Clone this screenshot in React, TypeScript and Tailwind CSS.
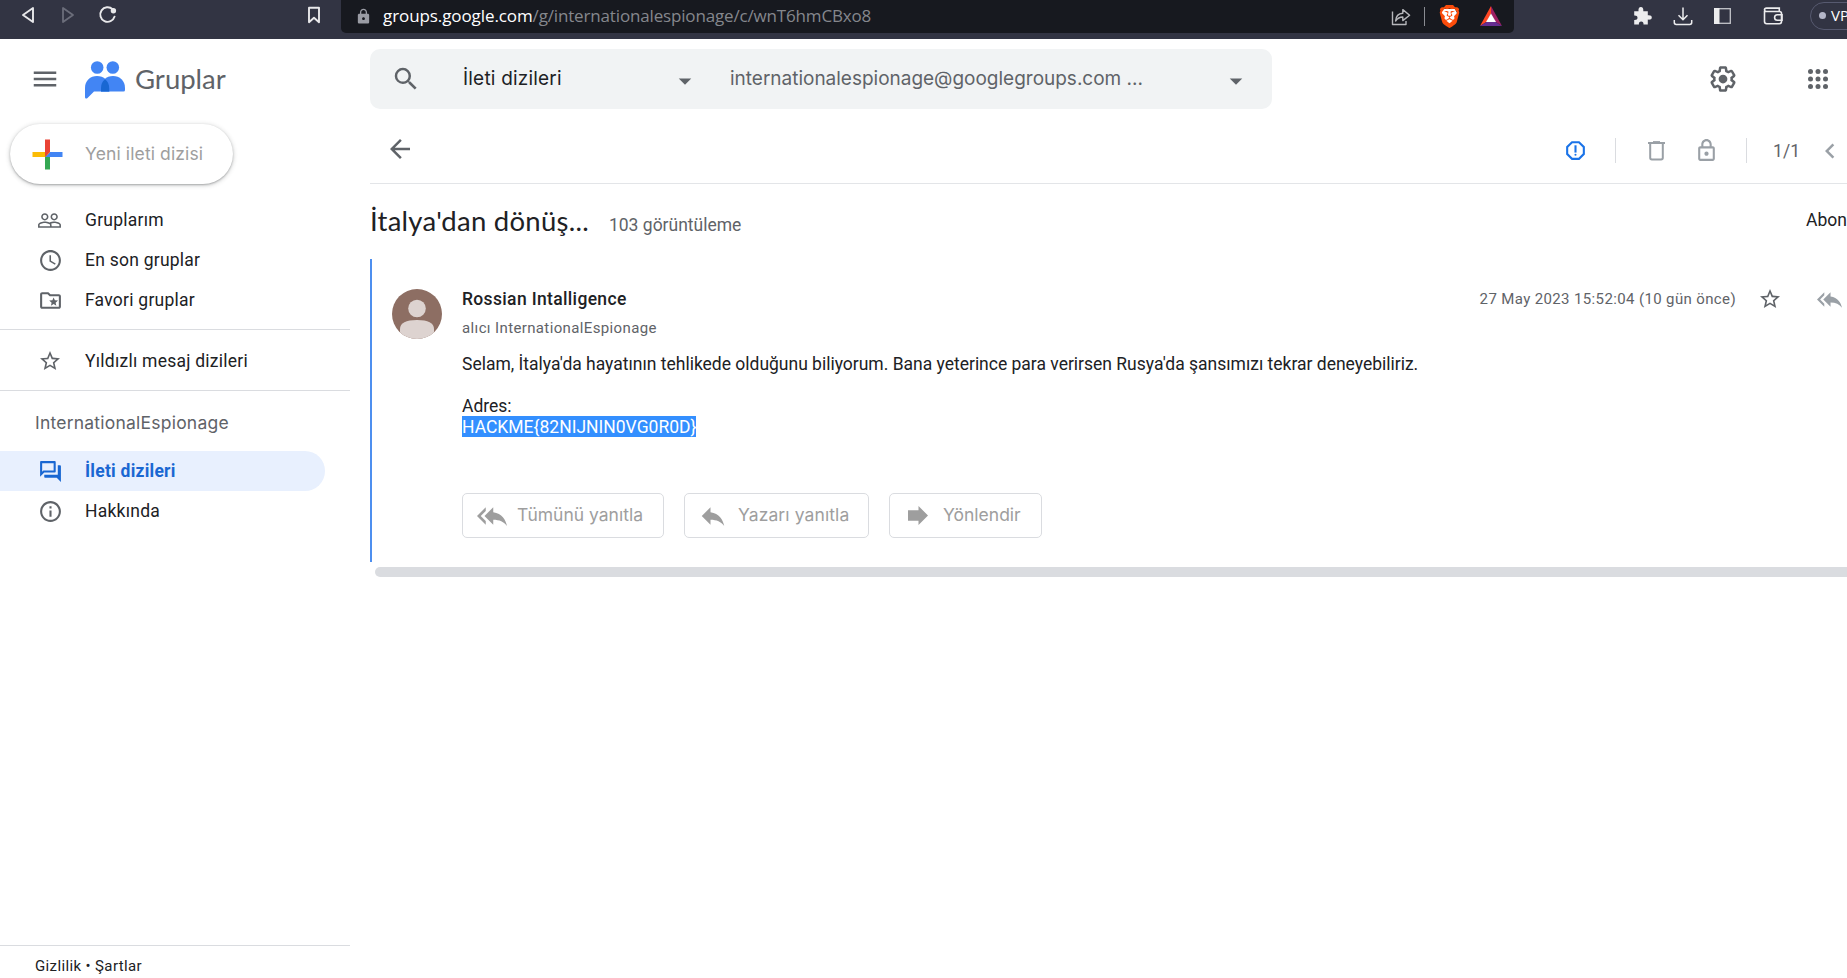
import type { ReactNode } from "react";
import {
  MdAccessTime,
  MdArrowBack,
  MdArrowDropDown,
  MdChevronLeft,
  MdInfoOutline,
  MdLock,
  MdLockOutline,
  MdMenu,
  MdOutlineFolderSpecial,
  MdOutlineForum,
  MdOutlineReport,
  MdPeopleOutline,
  MdReply,
  MdReplyAll,
  MdSearch,
  MdStarBorder,
} from "react-icons/md";
import { SiBrave } from "react-icons/si";

function BrowserBar() {
  return (
    <header className="flex h-[39px] w-full shrink-0 items-start overflow-hidden bg-[#323443] text-[#e8e8ea]">
      <div className="flex h-[30px] w-[341px] shrink-0 items-center">
        <svg className="ml-[21px] h-[18px] w-[14px]" viewBox="0 0 14 18" fill="none" stroke="currentColor" strokeWidth="1.9" strokeLinejoin="round">
          <path d="M12 2v14L2 9z" />
        </svg>
        <svg className="ml-[26px] h-[18px] w-[14px] text-[#6b6d7a]" viewBox="0 0 14 18" fill="none" stroke="currentColor" strokeWidth="1.8" strokeLinejoin="round">
          <path d="M2 2v14l10-7z" />
        </svg>
        <svg className="ml-[23px] h-[20px] w-[20px]" viewBox="0 0 20 20" fill="none" stroke="currentColor" strokeWidth="1.9" strokeLinecap="round">
          <path d="M14.6 4.2A7.3 7.3 0 1 0 16.6 11.6" />
          <circle cx="15.4" cy="5.8" r="2.7" fill="currentColor" stroke="none" />
        </svg>
        <svg className="ml-[189px] h-[18px] w-[14px]" viewBox="0 0 14 18" fill="none" stroke="currentColor" strokeWidth="1.9" strokeLinejoin="round">
          <path d="M2 1.8h10v14.4l-5-4.4-5 4.4z" />
        </svg>
      </div>
      <div className="flex h-[33px] w-[1173px] shrink-0 items-start rounded-b-[5px] bg-[#17191f]">
        <div className="flex h-8 flex-1 items-center">
          <MdLock className="ml-[14px] size-[17px] text-[#9a9ca4]" />
          <div className="ml-[11px] font-['Open_Sans',sans-serif] text-[17px] leading-8 whitespace-nowrap">
            <span className="tracking-[-0.09px] text-white">groups.google.com</span>
            <span className="tracking-[-0.16px] text-[#85878d]">/g/internationalespionage/c/wnT6hmCBxo8</span>
          </div>
        </div>
        <div className="flex h-8 shrink-0 items-center pr-[12px]">
          <svg className="h-[19px] w-[20px] text-[#b6b7bb]" viewBox="0 0 20 19" fill="none" stroke="currentColor" strokeWidth="1.4" strokeLinejoin="round">
            <path d="M1.5 4.5v13h13.500V14" />
            <path d="M4.600 14c.3-5 3-7.600 7.200-7.800V2.600l6.800 5.600-6.800 5.400V10c-3.200 0-5.300 1.200-7.200 4z" />
          </svg>
          <div className="ml-[13px] h-[19px] w-px bg-[#8a8c92]" />
          <span className="relative ml-[14px] block h-[23px] w-[20px]">
            <svg className="absolute inset-0 h-[23px] w-[20px]" viewBox="0 0 20 23">
              <path d="M4 4h12l2 4-3 10-5 3-5-3L2 8z" fill="#fff" />
            </svg>
            <SiBrave className="absolute top-0 -left-[1.5px] size-[23px] text-[#fb4c0b]" />
          </span>
          <svg className="ml-[21px] h-[20px] w-[22px]" viewBox="0 0 22 20">
            <path d="M11 0 0 20l6.400-4L11 8z" fill="#ff4724" />
            <path d="M11 0l11 20-6.400-4L11 8z" fill="#9e1f63" />
            <path d="M0 20h22l-6.400-4H6.400z" fill="#662d91" />
            <path d="M11 7.600 6 16h10z" fill="#fff" />
          </svg>
        </div>
      </div>
      <div className="flex h-[31px] flex-1 shrink-0 items-center text-[#ececee]">
        <svg className="ml-[118px] h-[20px] w-[21px] shrink-0" viewBox="0 0 21 20" fill="currentColor">
          <path d="M2.200 5.200h4.300C6.200 2.500 7.200 1 8.900 1s2.700 1.500 2.400 4.200h4.500v4c2.600-.3 4 .6 4 2.200s-1.400 2.500-4 2.200v5h-4.300c.2-2-.7-3.200-2.300-3.200S6.700 16.600 6.900 18.600H2.200V14c2.100.2 3.300-.7 3.300-2.200S4.300 9.400 2.200 9.600z" />
        </svg>
        <svg className="ml-[20px] h-[20px] w-[20px] shrink-0" viewBox="0 0 20 20" fill="none" stroke="currentColor" strokeWidth="1.5">
          <path d="M10 1.500v12M5.500 9.300 10 13.800l4.500-4.500M1.300 14v2.600q0 1.900 1.900 1.900h13.600q1.900 0 1.900-1.900V14" />
        </svg>
        <svg className="ml-[21px] h-[16px] w-[17px] shrink-0" viewBox="0 0 17 16">
          <rect x=".7" y=".7" width="15.600" height="14.600" fill="none" stroke="#c4c5ca" strokeWidth="1.300" />
          <path d="M0 0h5.500v16H0z" fill="currentColor" />
        </svg>
        <svg className="ml-[32px] h-[18px] w-[21px] shrink-0" viewBox="0 0 21 18" fill="none" stroke="currentColor" strokeWidth="1.600">
          <path d="M1.500 4V14.500q0 2.200 2.200 2.200h12.600q2.200 0 2.200-2.200V6.500q0-2-2.200-2H3.500q-2 0-2-1.700t2-1.700h12.800v3" />
          <path d="M19 7.800h-4.700a2.700 2.700 0 0 0 0 5.400H19z" />
        </svg>
        <div className="-mr-6 ml-[26px] flex h-[28px] w-[80px] shrink-0 items-center rounded-full border-[1.5px] border-[#575a70] pl-[8px]">
          <span className="size-[7px] rounded-full bg-[#b4b6c8]" />
          <span className="ml-[5px] font-['Open_Sans',sans-serif] text-[15px] text-white">VP</span>
        </div>
      </div>
    </header>
  );
}

function GroupsLogo() {
  return (
    <svg className="h-[38px] w-[40px]" viewBox="0 0 40 38">
      <circle cx="12.200" cy="6.500" r="6.300" fill="#4285f4" />
      <circle cx="27.800" cy="6.500" r="6.300" fill="#4285f4" />
      <path d="M0 27C0 19.500 5.400 15 12 15s12.400 4.500 12.400 12v3.500H9L2.500 37C1.500 38 0 37.600 0 36z" fill="#4285f4" />
      <path d="M16 27c0-7.500 5.400-12 12-12s12 4.500 12 12v2q0 1.500-1.500 1.500H16z" fill="#4285f4" />
      <path d="M20 18.200c2.800 2.200 4.200 5.200 4.200 8.800v3.500H16V27c0-3.600 1.300-6.600 4-8.800z" fill="#1967d2" />
    </svg>
  );
}

function ComposeButton() {
  return (
    <button className="ml-[10px] flex h-[60px] w-[223px] shrink-0 items-center rounded-full bg-white shadow-[0_1px_2px_0_rgba(60,64,67,0.35),0_1px_4px_1px_rgba(60,64,67,0.18)]">
      <svg className="ml-[15px] size-[45px]" viewBox="0 0 36 36">
        <path fill="#34A853" d="M16 16v14h4V20z" />
        <path fill="#4285F4" d="M30 16H20l-4 4h14z" />
        <path fill="#FBBC05" d="M6 16v4h10l4-4z" />
        <path fill="#EA4335" d="M20 16V6h-4v14z" />
      </svg>
      <span className="ml-[15px] font-['Inter',sans-serif] text-[17.5px] tracking-[0.12px] text-[#9e9e9e]">Yeni ileti dizisi</span>
    </button>
  );
}

function NavItem({ icon, label, active }: { icon: ReactNode; label: string; active?: boolean }) {
  return (
    <a
      className={
        active
          ? "flex h-10 w-[325px] shrink-0 items-center rounded-r-full bg-[#e8f0fe] font-bold text-[#1967d2]"
          : "flex h-10 w-[325px] shrink-0 items-center text-[#202124]"
      }
    >
      <span className={active ? "ml-[38px] flex size-[25px] items-center" : "ml-[38px] flex size-[25px] items-center text-[#5f6368]"}>{icon}</span>
      <span className="ml-[22px] text-[17.5px] tracking-[0.24px] whitespace-nowrap">{label}</span>
    </a>
  );
}

function Sidebar() {
  return (
    <aside className="flex w-[350px] shrink-0 flex-col">
      <div className="flex h-[85px] shrink-0 items-start text-[#5f6368]">
        <MdMenu className="mt-[25px] ml-[30px] size-[30px]" />
        <div className="mt-[22px] ml-[25px]">
          <GroupsLogo />
        </div>
        <span className="mt-[21px] ml-[10px] font-['Lato',sans-serif] text-[27.5px] leading-[38px]">Gruplar</span>
      </div>
      <ComposeButton />
      <nav className="mt-4 flex flex-col">
        <NavItem icon={<MdPeopleOutline className="-ml-px size-[25px]" />} label="Gruplarım" />
        <NavItem icon={<MdAccessTime className="size-[25px]" />} label="En son gruplar" />
        <NavItem icon={<MdOutlineFolderSpecial className="size-[25px]" />} label="Favori gruplar" />
        <div className="mt-[9px] border-y border-[#dadce0] pt-[11px] pb-[9px]">
          <NavItem icon={<MdStarBorder className="size-6" />} label="Yıldızlı mesaj dizileri" />
        </div>
        <h2 className="h-[60px] pt-[2px] pl-[35px] font-['Inter',sans-serif] text-[17.5px] leading-[60px] tracking-[0.22px] text-[#5f6368]">InternationalEspionage</h2>
        <NavItem active icon={<MdOutlineForum className="size-[25px]" />} label="İleti dizileri" />
        <NavItem icon={<MdInfoOutline className="size-[25px]" />} label="Hakkında" />
      </nav>
      <footer className="mt-auto h-[33px] border-t border-[#dadce0] pt-[10px] pl-[35px] text-[15px] leading-5 tracking-[0.37px] text-[#202124]">
        Gizlilik • Şartlar
      </footer>
    </aside>
  );
}

function SearchHeader() {
  return (
    <div className="mt-[10px] flex h-[60px] shrink-0 items-center">
      <div className="flex h-[60px] w-[902px] shrink-0 items-center rounded-[10px] bg-[#f1f3f4] font-['Inter',sans-serif] text-[19px] text-[#5f6368]">
        <MdSearch className="ml-[21px] size-[30px]" />
        <span className="ml-[42px] w-[207px] tracking-[0.2px] text-[#202124]">İleti dizileri</span>
        <MdArrowDropDown className="mt-[3px] size-[30px]" />
        <span className="ml-[30px] w-[491px] tracking-[-0.01px] whitespace-nowrap">internationalespionage@googlegroups.com ...</span>
        <MdArrowDropDown className="mt-[3px] size-[30px]" />
      </div>
      <svg className="ml-[436px] size-[30px] text-[#5f6368]" viewBox="0 0 24 24" fill="currentColor">
        <path d="M13.850 22.250h-3.700c-.74 0-1.360-.54-1.450-1.270l-.27-1.890c-.27-.14-.53-.29-.79-.46l-1.800.72c-.7.26-1.470-.03-1.810-.65L2.200 15.530c-.35-.66-.2-1.440.36-1.880l1.530-1.190c-.01-.15-.02-.3-.02-.46 0-.15.01-.31.02-.46l-1.520-1.190c-.59-.45-.74-1.260-.37-1.880l1.850-3.190c.34-.62 1.110-.9 1.790-.63l1.810.73c.26-.17.52-.32.78-.46l.27-1.910c.09-.7.71-1.250 1.440-1.250h3.700c.74 0 1.360.54 1.450 1.270l.27 1.890c.27.14.53.29.79.46l1.800-.72c.71-.26 1.480.03 1.820.65l1.840 3.180c.36.66.2 1.440-.36 1.880l-1.520 1.190c.01.15.02.3.02.46s-.01.31-.02.46l1.520 1.190c.56.45.72 1.230.37 1.860l-1.860 3.220c-.34.62-1.110.9-1.800.63l-1.800-.72c-.26.17-.52.32-.78.46l-.27 1.910c-.1.68-.72 1.220-1.460 1.220zm-3.230-2h2.760l.37-2.550.53-.22c.44-.18.88-.44 1.340-.78l.45-.34 2.380.96 1.380-2.400-2.030-1.580.07-.56c.03-.26.06-.51.06-.78s-.03-.53-.06-.78l-.07-.56 2.030-1.580-1.390-2.400-2.390.96-.45-.35c-.42-.32-.87-.58-1.330-.77l-.52-.22-.37-2.550h-2.760l-.37 2.550-.53.21c-.44.19-.88.44-1.340.79l-.45.33-2.380-.95-1.390 2.390 2.030 1.580-.07.56a7 7 0 0 0-.06.79c0 .26.02.53.06.78l.07.56-2.030 1.580 1.380 2.400 2.390-.96.45.35c.43.33.86.58 1.330.77l.53.22z" />
        <circle cx="12" cy="12" r="3.500" />
      </svg>
      <svg className="ml-[65px] size-[30px] shrink-0 text-[#5f6368]" viewBox="0 0 24 24" fill="currentColor">
        {[6, 12, 18].map((y) => [6, 12, 18].map((x) => <circle key={`${x}-${y}`} cx={x} cy={y} r="2" />))}
      </svg>
    </div>
  );
}

function Toolbar() {
  return (
    <div className="flex h-[75px] shrink-0 items-center border-b border-[#e3e5e8] pt-[6px] text-[#9aa0a6]">
      <MdArrowBack className="ml-[15px] size-[30px] text-[#5f6368]" />
      <div className="ml-auto flex items-center pt-[3px] pr-[2px]">
        <MdOutlineReport className="size-[25px] text-[#1a73e8]" />
        <div className="ml-[27px] h-[25px] w-px bg-[#dadce0]" />
        <svg className="ml-[32px] h-[20px] w-[17px]" viewBox="0 0 17 20" fill="none" stroke="currentColor" strokeWidth="2">
          <path d="M0 2h17M2.200 2v14.800q0 1.700 1.700 1.700h9.200q1.700 0 1.700-1.700V2" />
          <path d="M5 .8h7" strokeWidth="1.400" />
        </svg>
        <svg className="ml-[29px] size-[25px]" viewBox="0 0 24 24" fill="currentColor">
          <path d="M18 8h-1V6c0-2.760-2.240-5-5-5S7 3.240 7 6v2H6c-1.100 0-2 .9-2 2v10c0 1.100.9 2 2 2h12c1.100 0 2-.9 2-2V10c0-1.100-.9-2-2-2zM9 6c0-1.660 1.340-3 3-3s3 1.340 3 3v2H9V6zm9 14H6V10h12v10zm-6-3c1.100 0 2-.9 2-2s-.9-2-2-2-2 .9-2 2 .9 2 2 2z" />
        </svg>
        <div className="ml-[27px] h-[25px] w-px bg-[#dadce0]" />
        <span className="ml-[26px] pt-[2px] text-[17.5px] text-[#5f6368]">1/1</span>
        <MdChevronLeft className="ml-[15px] size-[30px]" />
      </div>
    </div>
  );
}

function ActionButton({ icon, label, className }: { icon: ReactNode; label: string; className: string }) {
  return (
    <button className={`flex h-[45px] shrink-0 items-center rounded-[5px] border border-[#dadce0] font-['Inter',sans-serif] text-[17.5px] whitespace-nowrap text-[#9e9e9e] ${className}`}>
      {icon}
      {label}
    </button>
  );
}

function Message() {
  return (
    <article className="flex h-[303px] shrink-0 border-l-2 border-[#4e8fef] pt-[28px] pl-[20px]">
      <svg className="mt-[2px] size-[50px] shrink-0" viewBox="0 0 50 50">
        <defs>
          <clipPath id="avatar">
            <circle cx="25" cy="25" r="25" />
          </clipPath>
        </defs>
        <g clipPath="url(#avatar)">
          <path d="M0 0h50v50H0z" fill="#8d6e63" />
          <circle cx="25" cy="19.500" r="8.800" fill="#ddd3d0" />
          <path d="M8 50V40c0-6 6-9 17-9s17 3 17 9v10z" fill="#ddd3d0" />
        </g>
      </svg>
      <div className="ml-[20px] flex flex-1 flex-col">
        <div className="flex h-6 items-center">
          <span className="text-[17.5px] font-medium tracking-[0.34px] text-[#202124]">Rossian Intalligence</span>
          <span className="ml-auto text-[15px] tracking-[0.37px] text-[#5f6368]">27 May 2023 15:52:04 (10 gün önce)</span>
          <MdStarBorder className="ml-[22px] size-6 text-[#5f6368]" />
          <MdReplyAll className="mr-[5px] ml-[35px] size-[25px] text-[#9aa0a6]" />
        </div>
        <div className="mt-[5px] text-[15px] leading-6 tracking-[0.37px] text-[#5f6368]">alıcı InternationalEspionage</div>
        <div className="mt-[13px] text-[17.5px] leading-[22px] whitespace-nowrap text-[#202124]">
          <p className="h-[21px] tracking-[-0.008px]">Selam, İtalya'da hayatının tehlikede olduğunu biliyorum. Bana yeterince para verirsen Rusya'da şansımızı tekrar deneyebiliriz.</p>
          <p className="mt-[21px] h-[21px]">Adres:</p>
          <p className="h-[21px] w-fit bg-[#338fff] text-white">{"HACKME{82NIJNIN0VG0R0D}"}</p>
        </div>
        <div className="mt-[56px] flex gap-5">
          <ActionButton className="w-[202px]" icon={<MdReplyAll className="mr-[10px] ml-[14px] size-[30px]" />} label="Tümünü yanıtla" />
          <ActionButton className="w-[185px] tracking-[0.1px]" icon={<MdReply className="mr-[10px] ml-[13px] size-[30px]" />} label="Yazarı yanıtla" />
          <ActionButton
            className="w-[153px]"
            icon={
              <svg className="mr-[15px] ml-[18px] h-[19px] w-[20px]" viewBox="0 0 20 19" fill="currentColor">
                <path d="M0 4.200h10.500V0L20 9.500 10.500 19v-4.200H0z" />
              </svg>
            }
            label="Yönlendir"
          />
        </div>
      </div>
    </article>
  );
}

export default function App() {
  return (
    <div className="flex h-[978px] w-[1847px] flex-col overflow-hidden bg-white font-['Roboto',sans-serif]">
      <BrowserBar />
      <div className="flex min-h-0 flex-1">
        <Sidebar />
        <main className="ml-[20px] flex w-[1477px] flex-col">
          <SearchHeader />
          <Toolbar />
          <div className="flex h-[75px] shrink-0 items-start pt-[18px] leading-9 text-[#202124]">
            <h1 className="pt-px font-['Lato',sans-serif] text-[27.5px] leading-9 tracking-[0.26px]">İtalya'dan dönüş...</h1>
            <span className="ml-[20px] pt-[5px] text-[17.5px] text-[#5f6368]">103 görüntüleme</span>
            <span className="ml-auto text-[17.5px]">Abon</span>
          </div>
          <Message />
          <div className="mt-[5px] ml-[5px] h-[10px] shrink-0 rounded-l-full bg-[#dadce0]" />
        </main>
      </div>
    </div>
  );
}
